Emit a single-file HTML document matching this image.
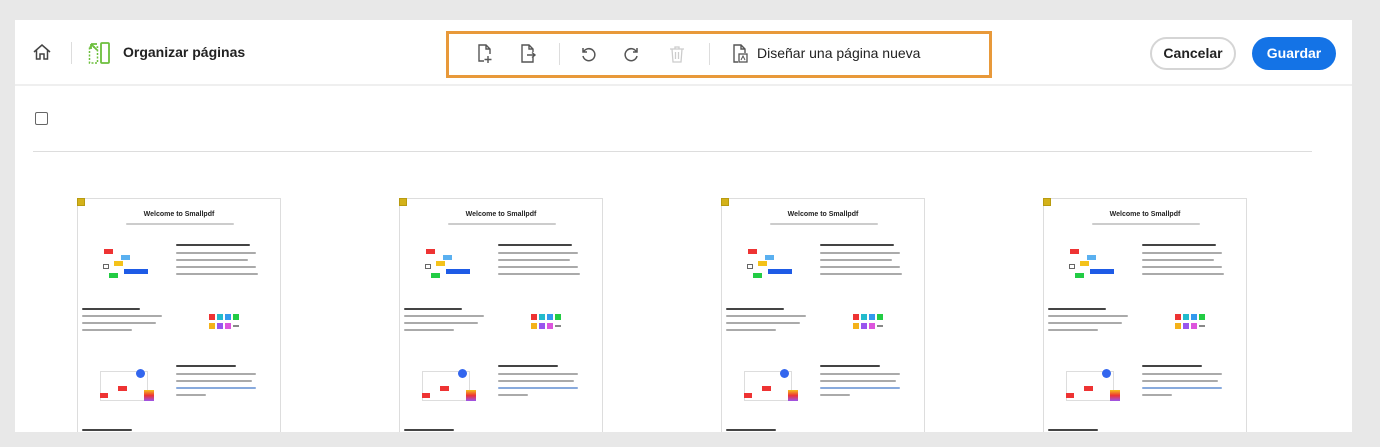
<!DOCTYPE html>
<html><head><meta charset="utf-8"><style>
*{margin:0;padding:0;box-sizing:border-box}
body{width:1380px;height:447px;background:#e8e8e8;font-family:"Liberation Sans",sans-serif;position:relative;overflow:hidden}
.panel{position:absolute;left:15px;top:20px;width:1337px;height:412px;background:#fff;overflow:hidden}
.hdr{position:absolute;left:0;top:0;width:100%;height:66px;border-bottom:2px solid #efefef}
.abs{position:absolute}
.title{left:108px;top:24px;font-size:14px;font-weight:bold;color:#222}
.tb{left:431px;top:11px;width:546px;height:47px;border:3px solid #e8993a}
.sep{width:1px;height:22px;background:#ddd}
.btn{top:17px;height:33px;border-radius:17px;font-size:14px;font-weight:bold;text-align:center;line-height:29px}
.page{position:absolute;top:178px;width:204px;height:240px;border:1px solid #ddd;background:#fff}
.page .b{position:absolute}
.ln{position:absolute;height:3px;background:#bbb;border-radius:1px}
</style></head><body>
<div class="panel">
<div class="hdr">
<svg class="abs" style="left:17px;top:23px" width="20" height="18" viewBox="0 0 20 18"><path d="M2 9 L10 2 L18 9 M4.5 7 V16 H8 V11 H12 V16 H15.5 V7" fill="none" stroke="#444" stroke-width="1.5"/></svg>
<div class="abs sep" style="left:56px;top:22px"></div>
<svg class="abs" style="left:73px;top:21px" width="24" height="24" viewBox="0 0 24 24"><rect x="1.5" y="6" width="8" height="16" fill="none" stroke="#6cbf3c" stroke-width="1.5" stroke-dasharray="2 1.5"/><rect x="13" y="2" width="8" height="20" rx="1" fill="none" stroke="#6cbf3c" stroke-width="1.8"/><path d="M9 3 L3 3 M3 3 L3 8 M3 3 L9 9" stroke="#6cbf3c" stroke-width="1.8" fill="none"/></svg>
<div class="abs title">Organizar páginas</div>
<div class="abs tb">
<svg class="abs" style="left:26px;top:9px" width="20" height="22" viewBox="0 0 20 22"><path d="M9 18 H4 V2 H11 L15 6 V11 M11 2 V6 H15 M13 13 V20 M9.5 16.5 H16.5" fill="none" stroke="#555" stroke-width="1.4"/></svg>
<svg class="abs" style="left:69px;top:9px" width="20" height="22" viewBox="0 0 20 22"><path d="M15 14 V19 H4 V2 H11 L15 6 V9 M11 2 V6 H15 M9 12 H17 M14 9.5 L17 12 L14 14.5" fill="none" stroke="#555" stroke-width="1.4"/></svg>
<div class="abs sep" style="left:110px;top:9px"></div>
<svg class="abs" style="left:129px;top:10px" width="20" height="20" viewBox="0 0 20 20"><path d="M5 4 V8 H9 M5.5 8 A6 6 0 1 1 5 12" fill="none" stroke="#555" stroke-width="1.5"/></svg>
<svg class="abs" style="left:173px;top:10px" width="20" height="20" viewBox="0 0 20 20"><path d="M15 4 V8 H11 M14.5 8 A6 6 0 1 0 15 12" fill="none" stroke="#555" stroke-width="1.5"/></svg>
<svg class="abs" style="left:218px;top:10px" width="20" height="20" viewBox="0 0 20 20"><path d="M3 5 H17 M8 5 V3 H12 V5 M5 5 L6 18 H14 L15 5 M8.5 8 V15 M11.5 8 V15" fill="none" stroke="#ccc" stroke-width="1.3"/></svg>
<div class="abs sep" style="left:260px;top:9px"></div>
<svg class="abs" style="left:281px;top:9px" width="20" height="22" viewBox="0 0 20 22"><path d="M8 19 H4 V2 H11 L15 6 V10 M11 2 V6 H15" fill="none" stroke="#555" stroke-width="1.4"/><rect x="9" y="11" width="8" height="8" fill="none" stroke="#555" stroke-width="1.3"/><path d="M11 17 L13 13 L15 17" fill="none" stroke="#555" stroke-width="1"/></svg>
<div class="abs" style="left:308px;top:11px;font-size:14px;color:#222">Diseñar una página nueva</div>
</div>
<div class="abs btn" style="left:1135px;width:86px;border:2px solid #d5d5d5;color:#222">Cancelar</div>
<div class="abs btn" style="left:1237px;width:84px;background:#1473e6;color:#fff;line-height:33px">Guardar</div>
</div>
<div class="abs" style="left:20px;top:92px;width:13px;height:13px;border:1.5px solid #666;border-radius:2px"></div>
<div class="abs" style="left:18px;top:131px;width:1279px;height:1px;background:#ddd"></div>
<div class="page" style="left:62px"></div>
<div class="page" style="left:384px"></div>
<div class="page" style="left:706px"></div>
<div class="page" style="left:1028px"></div>
</div>
<script>
var tpl='<div class="b" style="left:-1px;top:-1px;width:8px;height:8px;background:#d4b21a;border:1px solid #b89b10"></div>'+
'<div class="b" style="left:0;width:100%;top:12px;text-align:center;font-size:7px;font-weight:bold;color:#222">Welcome to Smallpdf</div>'+
'<div class="ln" style="left:48px;top:24px;width:108px;background:#ccc;height:2px"></div>'+
'<div class="b" style="left:26px;top:50px;width:9px;height:5px;background:#e33"></div>'+
'<div class="b" style="left:43px;top:56px;width:9px;height:5px;background:#5ab0f0"></div>'+
'<div class="b" style="left:36px;top:62px;width:9px;height:5px;background:#f4c21a"></div>'+
'<div class="b" style="left:25px;top:65px;width:6px;height:5px;border:1px solid #666"></div>'+
'<div class="b" style="left:46px;top:70px;width:24px;height:5px;background:#1e5be6"></div>'+
'<div class="b" style="left:31px;top:74px;width:9px;height:5px;background:#2c4"></div>'+
'<div class="ln" style="left:98px;top:45px;width:74px;background:#444;height:2px"></div>'+
'<div class="ln" style="left:98px;top:53px;width:80px;height:2px;background:#aaa"></div>'+
'<div class="ln" style="left:98px;top:60px;width:72px;height:2px;background:#aaa"></div>'+
'<div class="ln" style="left:98px;top:67px;width:80px;height:2px;background:#aaa"></div>'+
'<div class="ln" style="left:98px;top:74px;width:82px;height:2px;background:#aaa"></div>'+
'<div class="ln" style="left:4px;top:109px;width:58px;background:#444;height:2px"></div>'+
'<div class="ln" style="left:4px;top:116px;width:80px;height:2px;background:#aaa"></div>'+
'<div class="ln" style="left:4px;top:123px;width:74px;height:2px;background:#aaa"></div>'+
'<div class="ln" style="left:4px;top:130px;width:50px;height:2px;background:#aaa"></div>'+
'<div class="b" style="left:131px;top:115px;width:6px;height:6px;background:#e33"></div><div class="b" style="left:139px;top:115px;width:6px;height:6px;background:#2bc"></div><div class="b" style="left:147px;top:115px;width:6px;height:6px;background:#39e"></div><div class="b" style="left:155px;top:115px;width:6px;height:6px;background:#2c4"></div>'+
'<div class="b" style="left:131px;top:124px;width:6px;height:6px;background:#f4b21a"></div><div class="b" style="left:139px;top:124px;width:6px;height:6px;background:#95e"></div><div class="b" style="left:147px;top:124px;width:6px;height:6px;background:#d5d"></div><div class="b" style="left:155px;top:126px;width:6px;height:2px;background:#888"></div>'+
'<div class="ln" style="left:98px;top:166px;width:60px;background:#444;height:2px"></div>'+
'<div class="ln" style="left:98px;top:174px;width:80px;height:2px;background:#aaa"></div>'+
'<div class="ln" style="left:98px;top:181px;width:76px;height:2px;background:#aaa"></div>'+
'<div class="ln" style="left:98px;top:188px;width:80px;height:2px;background:#8ad"></div>'+
'<div class="ln" style="left:98px;top:195px;width:30px;height:2px;background:#aaa"></div>'+
'<div class="b" style="left:22px;top:172px;width:48px;height:30px;border:1px solid #ddd"></div>'+
'<div class="b" style="left:58px;top:170px;width:9px;height:9px;border-radius:50%;background:#36e"></div>'+
'<div class="b" style="left:40px;top:187px;width:9px;height:5px;background:#e33"></div>'+
'<div class="b" style="left:22px;top:194px;width:8px;height:5px;background:#e33"></div>'+
'<div class="b" style="left:66px;top:191px;width:10px;height:11px;background:linear-gradient(#f4c21a,#e33,#95e)"></div>'+
'<div class="ln" style="left:4px;top:230px;width:50px;background:#444;height:2px"></div>';
document.querySelectorAll('.page').forEach(function(p){p.innerHTML=tpl;});
</script>
</body></html>
